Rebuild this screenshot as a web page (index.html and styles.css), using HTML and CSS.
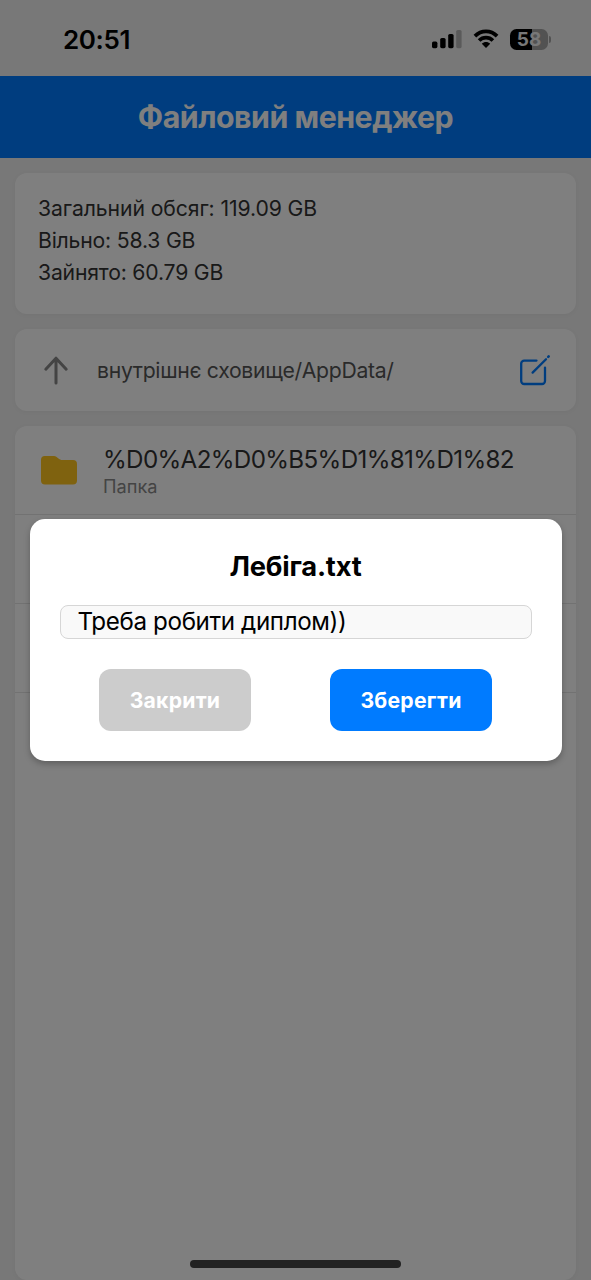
FILE: index.html
```html
<!DOCTYPE html>
<html lang="uk">
<head>
<meta charset="utf-8">
<title>Файловий менеджер</title>
<link rel="stylesheet" href="styles.css">
</head>
<body>
<div class="screen">
  <div class="status">
    <span class="time">20:51</span>
    <svg class="signal" width="30" height="20" viewBox="0 0 30 20">
      <rect x="0" y="12.6" width="5.4" height="6.6" rx="1.6"/>
      <rect x="8.2" y="9" width="5.4" height="10.2" rx="1.6"/>
      <rect x="16.2" y="5" width="5.4" height="14.2" rx="1.6"/>
      <rect class="faint" x="24.2" y="1" width="5.4" height="18.2" rx="1.6"/>
    </svg>
    <svg class="wifi" width="26" height="20" viewBox="0 0 26 20">
      <path class="arc" d="M1.9 7.1C8.2 .7 17.8 .7 24.1 7.1M6.1 11.5C10 7.6 16 7.6 19.9 11.5"/>
      <path d="M8.8 14.7C11.2 12.4 14.8 12.4 17.2 14.7L13 19.1Z"/>
    </svg>
    <div class="battery"><span class="level">58</span></div>
  </div>
  <header class="header"><h1 class="heading">Файловий менеджер</h1></header>
  <main class="content">
    <section class="card storage">
      <p class="total">Загальний обсяг: 119.09 GB</p>
      <p class="free">Вільно: 58.3 GB</p>
      <p class="used">Зайнято: 60.79 GB</p>
    </section>
    <section class="card path">
      <svg class="up" width="36" height="36" viewBox="0 0 36 36"><path d="M18 31V6.5M7.8 17.2L18 6.2L28.2 17.2"/></svg>
      <span class="location">внутрішнє сховище/AppData/</span>
      <svg class="edit" width="36" height="36" viewBox="0 0 36 36">
        <path d="M20.5 8.6H8.2a3 3 0 0 0-3 3V29a3 3 0 0 0 3 3H26a3 3 0 0 0 3-3V15.6M16.6 20.6L30 7.2"/>
        <path class="tip" d="M32.2 4.9L32.7 4.4"/>
      </svg>
    </section>
    <section class="card files">
      <div class="row">
        <svg class="folder" width="36" height="29" viewBox="0 0 36 29"><path d="M3.8 0H13q1.3 0 2.3.8l2.8 2.3q1 .8 2.3.8H32a4 4 0 0 1 4 4v16.7a4 4 0 0 1-4 4H4a4 4 0 0 1-4-4V3.8A3.8 3.8 0 0 1 3.8 0Z"/></svg>
        <div class="info">
          <span class="name">%D0%A2%D0%B5%D1%81%D1%82</span>
          <span class="kind">Папка</span>
        </div>
      </div>
      <div class="row"></div>
      <div class="row"></div>
    </section>
  </main>
  <div class="overlay">
    <div class="dialog">
      <h2 class="title">Лебіга.txt</h2>
      <div class="field"><span class="value">Треба робити диплом))</span></div>
      <div class="actions">
        <button class="button close"><span class="closelabel">Закрити</span></button>
        <button class="button save"><span class="savelabel">Зберегти</span></button>
      </div>
    </div>
  </div>
  <div class="home"></div>
</div>
</body>
</html>
```
FILE: styles.css
```css
* { box-sizing: border-box; margin: 0; padding: 0; }
body { width: 591px; height: 1280px; overflow: hidden; font-family: Inter, "Liberation Sans", sans-serif; white-space: nowrap; }
.screen { position: relative; height: 1280px; display: flex; flex-direction: column; background: #f0f0f0; }
.status { height: 76px; padding: 2px 43px 0 63px; display: flex; align-items: center; }
.time { font-size: 26px; font-weight: 600; letter-spacing: -.4px; margin-right: auto; }
.signal { margin-right: 11px; }
.faint { opacity: .25; }
.wifi { margin-right: 11px; }
.arc { fill: none; stroke: #000; stroke-width: 3.7; }
.battery { position: relative; width: 38px; height: 21px; border-radius: 6.5px; background: linear-gradient(90deg, #000 22px, #a4a4a4 22px); text-align: center; color: #f0f0f0; }
.battery::after { content: ""; position: absolute; left: 39px; top: 7px; width: 2px; height: 7px; border-radius: 0 2px 2px 0; background: #a4a4a4; }
.level { display: block; font-size: 19px; line-height: 21px; font-weight: 700; }
.header { height: 82px; display: flex; align-items: center; justify-content: center; background: #007bff; color: #fff; }
.heading { font-size: 30.3px; font-weight: 700; letter-spacing: -.48px; }
.content { flex: 1; padding: 15px 15px 0; display: flex; flex-direction: column; gap: 15px; }
.card { background: #fff; border-radius: 12px; box-shadow: 0 1px 5px rgba(0,0,0,.04); }
.storage { height: 141px; padding: 19px 23px; font-size: 21.2px; line-height: 32px; color: #333; }
.total { letter-spacing: -.1px; }
.free, .used { letter-spacing: -.19px; }
.path { height: 82px; padding: 0 24px 0 23px; display: flex; align-items: center; }
.up { fill: none; stroke: #888; stroke-width: 3; stroke-linecap: round; stroke-linejoin: round; }
.location { margin-left: 23px; font-size: 21.2px; letter-spacing: -.31px; color: #555; }
.edit { margin-left: auto; fill: none; stroke: #007bff; stroke-width: 2.3; stroke-linecap: round; }
.tip { stroke-width: 2.6; }
.files { flex: 1; }
.row { height: 89px; padding: 1px 26px 0; display: flex; align-items: center; border-bottom: 1px solid #e4e4e4; }
.folder { fill: #ffc41f; }
.info { margin-left: 26px; display: flex; flex-direction: column; }
.name { font-size: 24.2px; line-height: 30px; letter-spacing: -.65px; color: #333; }
.kind { font-size: 18.2px; line-height: 22px; color: #888; }
.overlay { position: absolute; inset: 0; display: flex; align-items: center; justify-content: center; background: rgba(0,0,0,.5); }
.dialog { width: 532px; height: 242px; padding: 31px 30px 30px; border-radius: 15px; background: #fff; box-shadow: 0 3px 6px rgba(0,0,0,.25); }
.title { height: 34px; line-height: 34px; font-size: 27.3px; font-weight: 700; letter-spacing: -.2px; text-align: center; }
.field { height: 34px; margin-top: 21px; padding: 0 0 2px 17px; display: flex; align-items: center; border: 1.5px solid #d6d6d6; border-radius: 8px; background: #f9f9f9; }
.value { font-size: 24.2px; letter-spacing: -.38px; }
.actions { margin-top: 30px; display: flex; justify-content: space-around; }
.button { height: 62px; border: 0; border-radius: 12px; color: #fff; font: 700 21.2px Inter, "Liberation Sans", sans-serif; letter-spacing: .22px; }
.close { width: 152px; background: #ccc; }
.save { width: 162px; background: #007bff; }
.home { position: absolute; left: 190px; bottom: 12px; width: 211px; height: 8px; border-radius: 4px; background: #222; }
```
